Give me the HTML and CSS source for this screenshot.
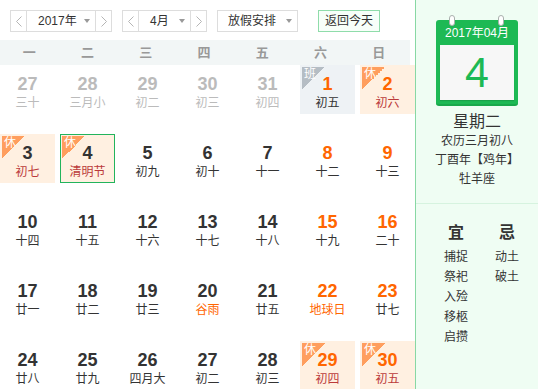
FILE: index.html
```html
<!DOCTYPE html>
<html lang="zh-CN">
<head>
<meta charset="utf-8">
<title>万年历</title>
<link rel="stylesheet" href="styles.css">
</head>
<body>
<div class="app">
  <div class="main">
    <div class="toolbar">
      <div class="select">
        <span class="arrow prev"><svg width="6" height="11" viewBox="0 0 6 11"><polyline points="5.5,0.5 0.5,5.5 5.5,10.5" /></svg></span>
        <span class="value year">2017年<i class="caret"></i></span>
        <span class="arrow next"><svg width="6" height="11" viewBox="0 0 6 11"><polyline points="0.5,0.5 5.5,5.5 0.5,10.5" /></svg></span>
      </div>
      <div class="select">
        <span class="arrow prev"><svg width="6" height="11" viewBox="0 0 6 11"><polyline points="5.5,0.5 0.5,5.5 5.5,10.5" /></svg></span>
        <span class="value month">4月<i class="caret"></i></span>
        <span class="arrow next"><svg width="6" height="11" viewBox="0 0 6 11"><polyline points="0.5,0.5 5.5,5.5 0.5,10.5" /></svg></span>
      </div>
      <div class="select holiday">
        <span class="value">放假安排<i class="caret"></i></span>
      </div>
      <button class="today-btn">返回今天</button>
    </div>
    <div class="weekdays">
      <span>一</span><span>二</span><span>三</span><span>四</span><span>五</span><span>六</span><span>日</span>
    </div>
    <div class="grid">
      <div class="cell other"><b class="num">27</b><span class="lunar">三十</span></div>
      <div class="cell other"><b class="num">28</b><span class="lunar">三月小</span></div>
      <div class="cell other"><b class="num">29</b><span class="lunar">初二</span></div>
      <div class="cell other"><b class="num">30</b><span class="lunar">初三</span></div>
      <div class="cell other"><b class="num">31</b><span class="lunar">初四</span></div>
      <div class="cell work weekend"><i class="tag">班</i><b class="num">1</b><span class="lunar">初五</span></div>
      <div class="cell rest weekend"><i class="tag">休</i><b class="num">2</b><span class="lunar">初六</span></div>

      <div class="cell rest"><i class="tag">休</i><b class="num">3</b><span class="lunar">初七</span></div>
      <div class="cell rest today"><i class="tag">休</i><b class="num">4</b><span class="lunar">清明节</span></div>
      <div class="cell"><b class="num">5</b><span class="lunar">初九</span></div>
      <div class="cell"><b class="num">6</b><span class="lunar">初十</span></div>
      <div class="cell"><b class="num">7</b><span class="lunar">十一</span></div>
      <div class="cell weekend"><b class="num">8</b><span class="lunar">十二</span></div>
      <div class="cell weekend"><b class="num">9</b><span class="lunar">十三</span></div>

      <div class="cell"><b class="num">10</b><span class="lunar">十四</span></div>
      <div class="cell"><b class="num">11</b><span class="lunar">十五</span></div>
      <div class="cell"><b class="num">12</b><span class="lunar">十六</span></div>
      <div class="cell"><b class="num">13</b><span class="lunar">十七</span></div>
      <div class="cell"><b class="num">14</b><span class="lunar">十八</span></div>
      <div class="cell weekend"><b class="num">15</b><span class="lunar">十九</span></div>
      <div class="cell weekend"><b class="num">16</b><span class="lunar">二十</span></div>

      <div class="cell"><b class="num">17</b><span class="lunar">廿一</span></div>
      <div class="cell"><b class="num">18</b><span class="lunar">廿二</span></div>
      <div class="cell"><b class="num">19</b><span class="lunar">廿三</span></div>
      <div class="cell"><b class="num">20</b><span class="lunar festival">谷雨</span></div>
      <div class="cell"><b class="num">21</b><span class="lunar">廿五</span></div>
      <div class="cell weekend"><b class="num">22</b><span class="lunar festival">地球日</span></div>
      <div class="cell weekend"><b class="num">23</b><span class="lunar">廿七</span></div>

      <div class="cell"><b class="num">24</b><span class="lunar">廿八</span></div>
      <div class="cell"><b class="num">25</b><span class="lunar">廿九</span></div>
      <div class="cell"><b class="num">26</b><span class="lunar">四月大</span></div>
      <div class="cell"><b class="num">27</b><span class="lunar">初二</span></div>
      <div class="cell"><b class="num">28</b><span class="lunar">初三</span></div>
      <div class="cell rest weekend"><i class="tag">休</i><b class="num">29</b><span class="lunar">初四</span></div>
      <div class="cell rest weekend"><i class="tag">休</i><b class="num">30</b><span class="lunar">初五</span></div>
    </div>
  </div>
  <aside class="side">
    <div class="calendar">
      <span class="ring ring-left"></span>
      <span class="ring ring-right"></span>
      <div class="cal-box">
        <div class="cal-head">2017年04月</div>
        <div class="cal-day">4</div>
      </div>
    </div>
    <div class="info">
      <div class="week">星期二</div>
      <div class="line">农历三月初八</div>
      <div class="line">丁酉年【鸡年】</div>
      <div class="line">牡羊座</div>
    </div>
    <div class="yiji">
      <div class="col">
        <div class="yj-title">宜</div>
        <div class="yj-item">捕捉</div>
        <div class="yj-item">祭祀</div>
        <div class="yj-item">入殓</div>
        <div class="yj-item">移柩</div>
        <div class="yj-item">启攒</div>
      </div>
      <div class="col">
        <div class="yj-title">忌</div>
        <div class="yj-item">动土</div>
        <div class="yj-item">破土</div>
      </div>
    </div>
  </aside>
</div>
</body>
</html>
```
FILE: styles.css
```css
* { box-sizing: border-box; }

body {
  margin: 0;
  background: #fff;
  color: #333;
  font-family: "Liberation Sans", "Noto Sans CJK SC", sans-serif;
}

.app {
  display: flex;
  width: 538px;
  height: 389px;
  overflow: hidden;
}

.main {
  width: 415px;
  flex: none;
  padding-top: 10px;
}

/* toolbar */
.toolbar {
  display: flex;
  align-items: center;
  gap: 10px;
  height: 22px;
  padding-left: 10px;
  font-size: 12px;
}

.select {
  display: flex;
  height: 22px;
  border: 1px solid #ddd;
  background: #fff;
}

.arrow {
  width: 16px;
  display: flex;
  align-items: center;
  justify-content: center;
}

.arrow.prev { border-right: 1px solid #ddd; }
.arrow.next { border-left: 1px solid #ddd; }

.arrow svg polyline {
  fill: none;
  stroke: #b5b5b5;
  stroke-width: 1;
}

.value {
  display: flex;
  align-items: center;
  justify-content: space-between;
  padding: 0 5px 0 11px;
  line-height: 20px;
}

.value.year { width: 68px; }
.value.month { width: 51px; }
.holiday .value { width: 79px; padding-left: 10px; }

.caret {
  width: 0;
  height: 0;
  border-left: 3.5px solid transparent;
  border-right: 3.5px solid transparent;
  border-top: 4px solid #999;
}

.today-btn {
  margin-left: 10px;
  width: 62px;
  height: 22px;
  padding: 0;
  border: 1px solid #8fdcaa;
  background: #f7fff9;
  color: #333;
  font: inherit;
  font-size: 12px;
  line-height: 20px;
}

/* weekday header */
.weekdays {
  display: grid;
  grid-template-columns: repeat(7, 1fr);
  width: 410px;
  padding-right: 2px;
  height: 25px;
  margin-top: 8px;
  background: #f2f6f6;
  color: #999;
  font-size: 13px;
  font-weight: bold;
  line-height: 25px;
  text-align: center;
}

/* day grid */
.grid {
  display: grid;
  grid-template-columns: repeat(7, 55px);
  grid-auto-rows: 49px;
  column-gap: 5px;
  row-gap: 20px;
}

.cell {
  position: relative;
  text-align: center;
  padding-top: 8px;
}

.num {
  display: block;
  font-size: 18px;
  font-weight: bold;
  line-height: 22px;
  color: #333;
}

.lunar {
  display: block;
  font-size: 12px;
  line-height: 16px;
  color: #333;
}

.weekend .num { color: #ff6600; }
.other .num, .other .lunar { color: #bbb; }
.lunar.festival { color: #ff6600; }

.rest { background: #fff0e1; }
.rest .lunar { color: #bb3a3a; }
.work { background: #eef2f5; }

.today { border: 1px solid #22b45c; padding-top: 7px; }
.today .tag { top: 1px; left: 1px; }

.tag {
  position: absolute;
  top: 2px;
  left: 2px;
  width: 23px;
  height: 23px;
  padding: 0 0 0 2px;
  font-style: normal;
  font-size: 12px;
  line-height: 14px;
  color: #fff;
  text-align: left;
  background: linear-gradient(135deg, #ff9e5e 50%, transparent 50%);
}

.work .tag {
  background: linear-gradient(135deg, #b5bdc4 50%, transparent 50%);
}

/* side panel */
.side {
  flex: 1;
  border-left: 1px solid #88d8a4;
  background: #effdf3;
  padding-top: 15px;
}

.calendar {
  position: relative;
  width: 82px;
  margin: 0 auto;
  padding-top: 5px;
}

.ring {
  position: absolute;
  top: 0;
  width: 6px;
  height: 11px;
  border: 1px solid #aab0ad;
  border-radius: 3px;
  background: #fff;
}

.ring-left { left: 13px; }
.ring-right { left: 62px; }

.cal-box {
  height: 86px;
  padding: 0 4px;
  background: #1db954;
  border-radius: 3px;
  border-bottom: 2px solid #19a84b;
}

.cal-head {
  height: 25px;
  line-height: 26px;
  font-size: 12px;
  color: #fff;
  text-align: center;
}

.cal-day {
  height: 55px;
  background: #f7f7f7;
  box-shadow: 0 1px 1px rgba(0, 0, 0, 0.12);
  color: #1db954;
  font-size: 43px;
  line-height: 55px;
  text-align: center;
}

.info {
  margin-top: 6px;
  text-align: center;
  color: #333;
}

.week {
  font-size: 16px;
  line-height: 20px;
}

.line {
  font-size: 12px;
  line-height: 19px;
}

.yiji {
  display: flex;
  gap: 11px;
  margin-top: 14px;
  padding: 19px 0 0 20px;
  border-top: 1px solid #d6f3df;
}

.col {
  width: 40px;
  text-align: center;
}

.yj-title {
  font-size: 16px;
  font-weight: bold;
  line-height: 20px;
  margin-bottom: 4px;
}

.yj-item {
  font-size: 12px;
  line-height: 20px;
}
```
